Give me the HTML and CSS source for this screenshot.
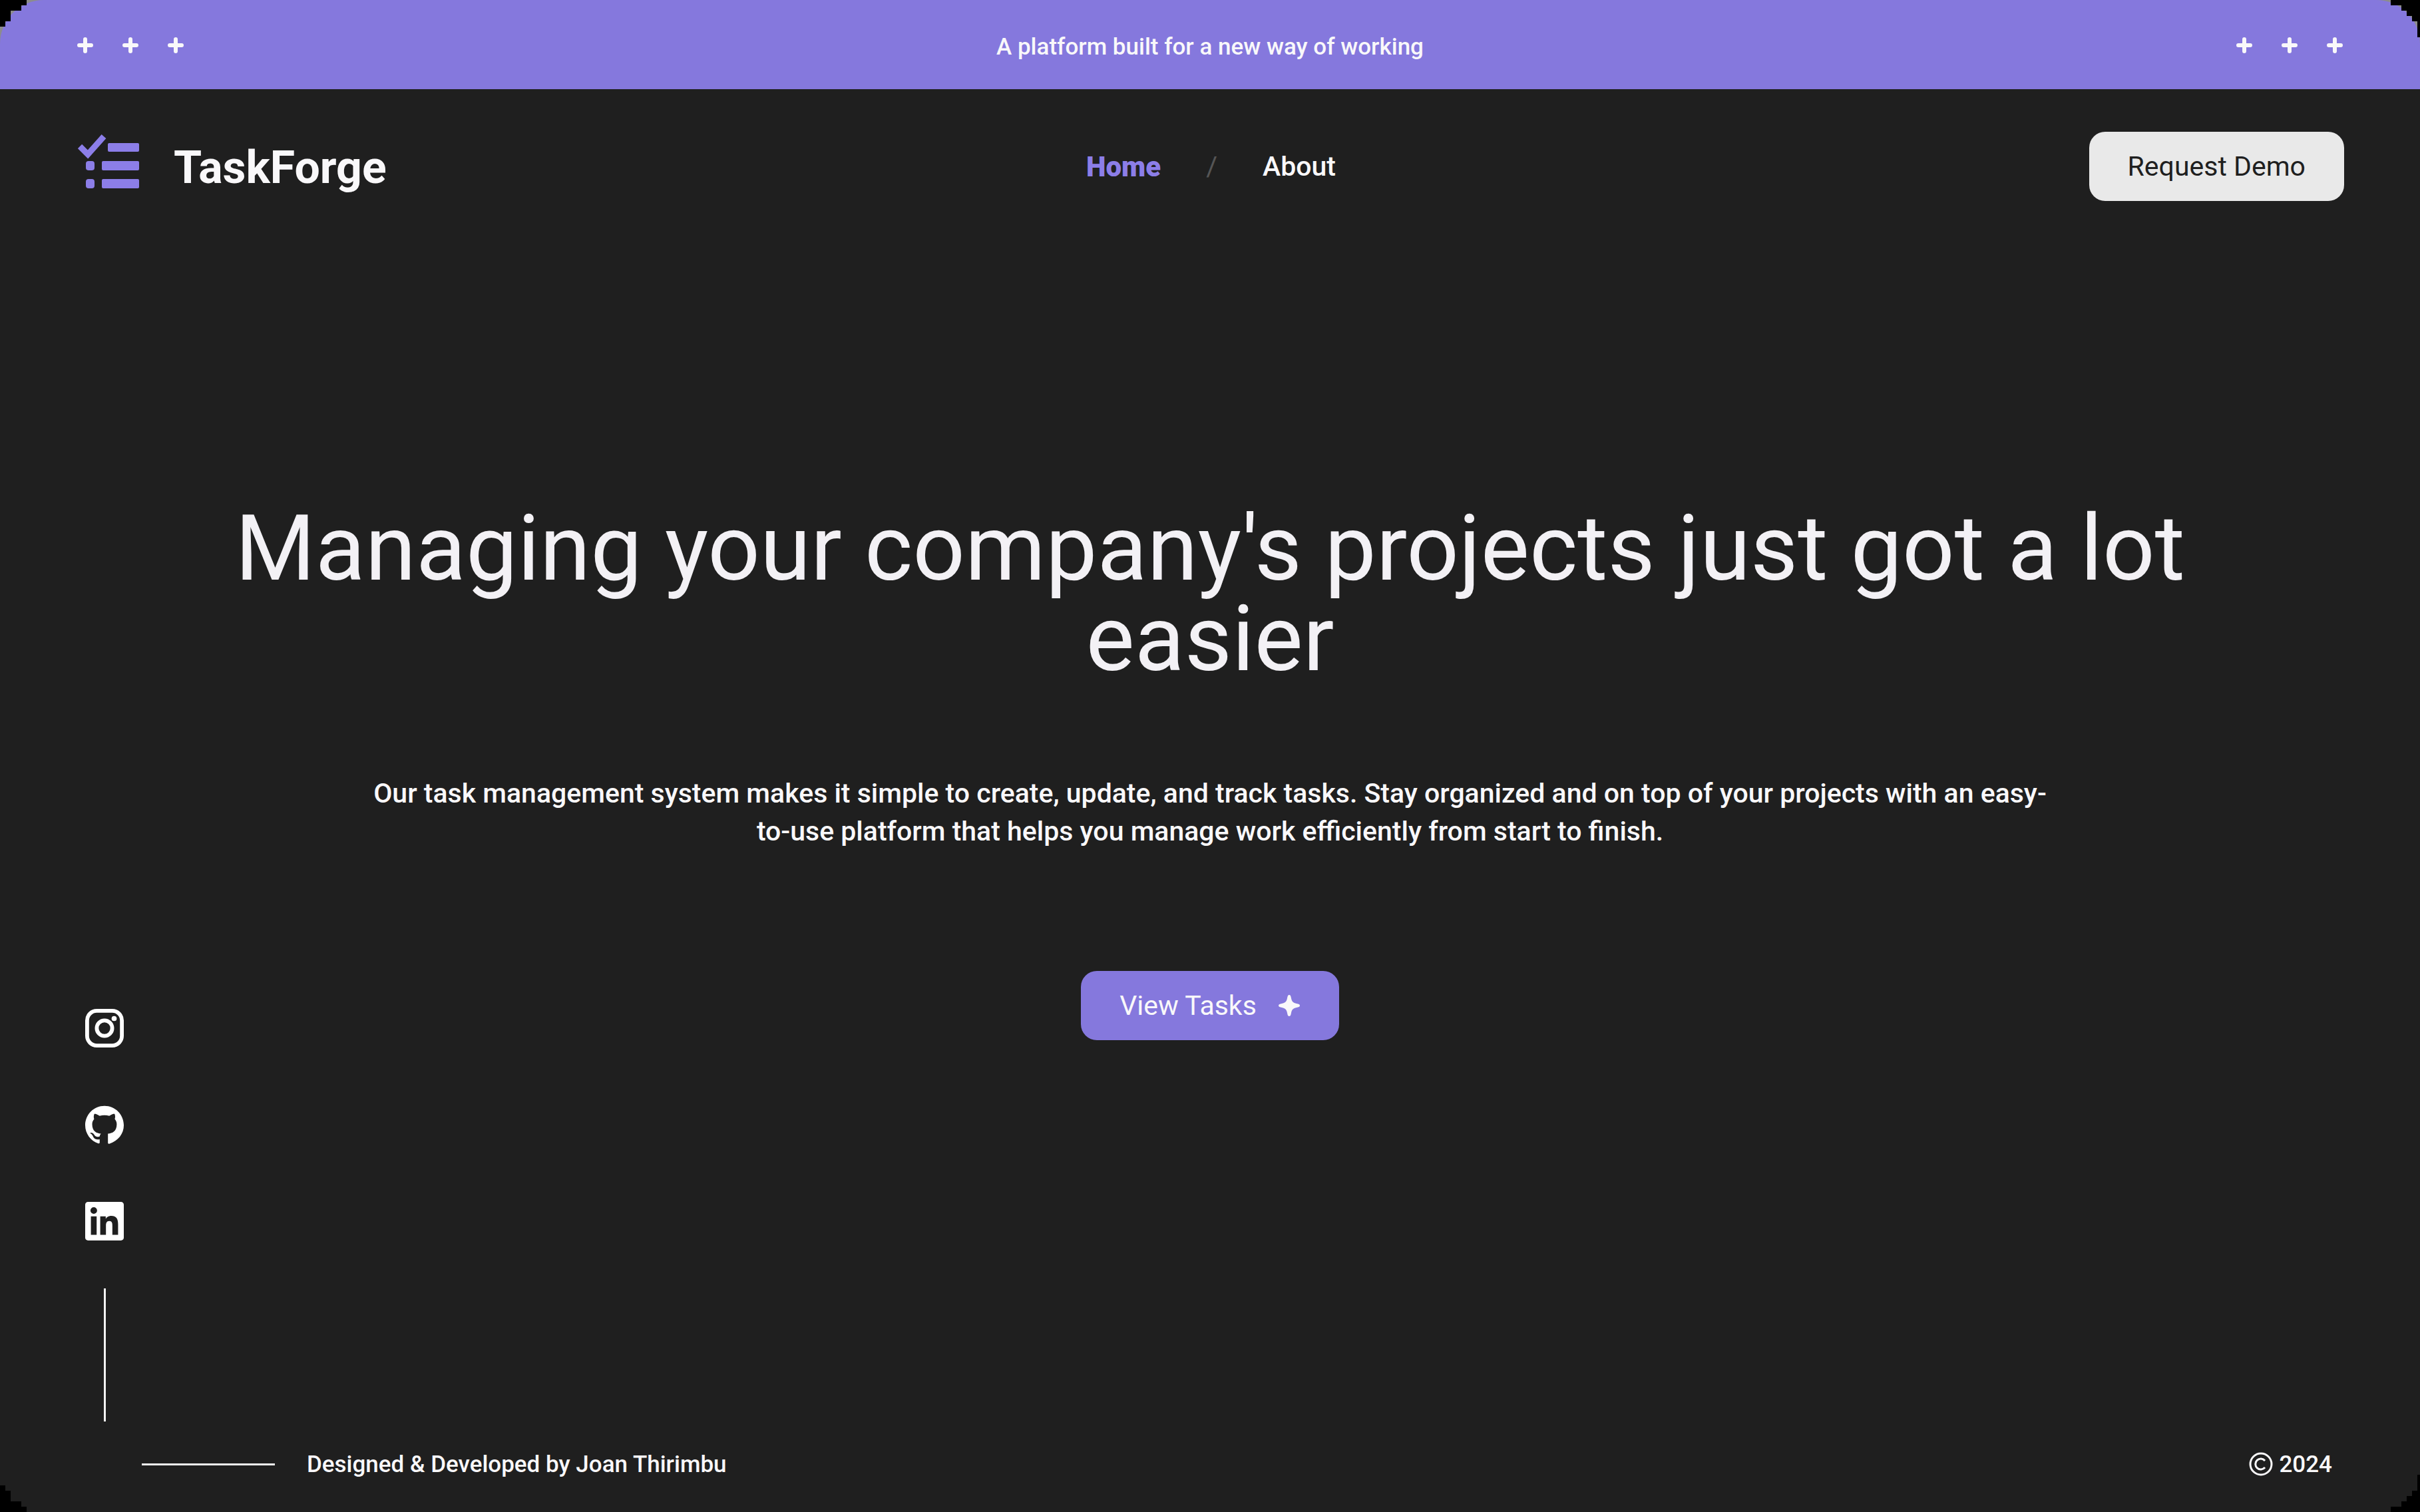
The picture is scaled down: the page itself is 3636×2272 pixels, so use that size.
FILE: index.html
```html
<!DOCTYPE html>
<html lang="en">
<head>
<meta charset="utf-8">
<meta name="viewport" content="width=device-width, initial-scale=1">
<title>TaskForge</title>
<link rel="stylesheet" href="styles.css">
</head>
<body>
<svg class="sprite" aria-hidden="true">
  <symbol id="plus" viewBox="0 0 24 24"><path d="M12 3v18M3 12h18" fill="none" stroke="currentColor" stroke-width="6" stroke-linecap="round"/></symbol>
  <symbol id="corner" viewBox="0 0 44 56"><path d="M0 0H40V8H32V16H16V32H8V40H0Z"/></symbol>
  <symbol id="corner-wide" viewBox="0 0 44 56"><path d="M0 0H44V8H28V16H20V24H12V32H4V56H0Z"/></symbol>
</svg>
<div class="page">
  <div class="banner-wrap">
    <div class="banner">
      <div class="pluses" aria-hidden="true">
        <svg><use href="#plus"/></svg><svg><use href="#plus"/></svg><svg><use href="#plus"/></svg>
      </div>
      <p class="banner-text">A platform built for a new way of working</p>
      <div class="pluses" aria-hidden="true">
        <svg><use href="#plus"/></svg><svg><use href="#plus"/></svg><svg><use href="#plus"/></svg>
      </div>
    </div>
  </div>
  <header class="header">
    <a class="brand" href="#">
      <svg class="brand-icon" viewBox="0 0 92 82" aria-hidden="true">
        <path d="M3 19 15 31 39 4" fill="none" stroke="currentColor" stroke-width="9"/>
        <g fill="currentColor">
          <rect x="45" y="14" width="47" height="13" rx="2"/>
          <rect x="36" y="41" width="56" height="14" rx="2"/>
          <rect x="36" y="68" width="56" height="14" rx="2"/>
          <rect x="12" y="41" width="13" height="14" rx="4"/>
          <rect x="12" y="68" width="13" height="14" rx="4"/>
        </g>
      </svg>
      <span>TaskForge</span>
    </a>
    <nav class="nav">
      <a class="active" href="#">Home</a>
      <span class="slash">/</span>
      <a href="#">About</a>
    </nav>
    <button class="btn btn-light" type="button">Request Demo</button>
  </header>
  <main class="main">
    <aside class="social">
      <a href="#" aria-label="Instagram">
        <svg viewBox="0 0 60 60" fill="none" stroke="currentColor" stroke-width="6"><rect x="3" y="3" width="54" height="54" rx="15"/><circle cx="30" cy="30" r="12"/><circle cx="45" cy="15" r="4" fill="currentColor" stroke="none"/></svg>
      </a>
      <a href="#" aria-label="GitHub">
        <svg viewBox="0 0 24 24" fill="currentColor"><path d="M12 .297c-6.63 0-12 5.373-12 12 0 5.303 3.438 9.8 8.205 11.385.6.113.82-.258.82-.577 0-.285-.01-1.04-.015-2.04-3.338.724-4.042-1.61-4.042-1.61C4.422 18.07 3.633 17.7 3.633 17.7c-1.087-.744.084-.729.084-.729 1.205.084 1.838 1.236 1.838 1.236 1.07 1.835 2.809 1.305 3.495.998.108-.776.417-1.305.76-1.605-2.665-.3-5.466-1.332-5.466-5.93 0-1.31.465-2.38 1.235-3.22-.135-.303-.54-1.523.105-3.176 0 0 1.005-.322 3.3 1.23.96-.267 1.98-.399 3-.405 1.02.006 2.04.138 3 .405 2.28-1.552 3.285-1.23 3.285-1.23.645 1.653.24 2.873.12 3.176.765.84 1.23 1.91 1.23 3.22 0 4.61-2.805 5.625-5.475 5.92v5.7c0 .315.21.69.825.57C20.565 22.092 24 17.592 24 12.297c0-6.627-5.373-12-12-12"/></svg>
      </a>
      <a href="#" aria-label="LinkedIn">
        <svg viewBox="0 0 24 24" fill="currentColor"><path d="M20.447 20.452h-3.554v-5.569c0-1.328-.027-3.037-1.852-3.037-1.853 0-2.136 1.445-2.136 2.939v5.667H9.351V9h3.414v1.561h.046c.477-.9 1.637-1.85 3.37-1.85 3.601 0 4.267 2.37 4.267 5.455v6.286zM5.337 7.433a2.062 2.062 0 1 1 0-4.125 2.062 2.062 0 0 1 0 4.125zm1.782 13.019H3.555V9h3.564v11.452zM22.225 0H1.771C.792 0 0 .774 0 1.729v20.542C0 23.227.792 24 1.771 24h20.451C23.2 24 24 23.227 24 22.271V1.729C24 .774 23.2 0 22.222 0h.003z"/></svg>
      </a>
      <span class="rule-v"></span>
    </aside>
    <section class="hero">
      <h1>Managing your company's projects just got a lot easier</h1>
      <p>Our task management system makes it simple to create, update, and track tasks. Stay organized and on top of your projects with an easy-to-use platform that helps you manage work efficiently from start to finish.</p>
      <button class="btn btn-primary" type="button">View Tasks
        <svg viewBox="0 0 34 34" aria-hidden="true"><path d="M17 1c2 0 2.500 2 3 5 1 5 3 7 8 8 3 .5 5 1 5 3s-2 2.500-5 3c-5 1-7 3-8 8-.5 3-1 5-3 5s-2.500-2-3-5c-1-5-3-7-8-8-3-.5-5-1-5-3s2-2.500 5-3c5-1 7-3 8-8 .5-3 1-5 3-5z" fill="currentColor"/></svg>
      </button>
    </section>
  </main>
  <footer class="footer">
    <p class="credit"><span class="rule-h"></span>Designed &amp; Developed by Joan Thirimbu</p>
    <p class="copyright">
      <svg viewBox="0 0 36 36" fill="none" stroke="currentColor" role="img" aria-label="Copyright"><circle cx="18" cy="18" r="16" stroke-width="3"/><path d="M24 13a8 8 0 1 0 0 10" stroke-width="3"/></svg>
      2024
    </p>
  </footer>
  <svg class="corner tl" aria-hidden="true"><use href="#corner"/></svg>
  <svg class="corner tr" aria-hidden="true"><use href="#corner-wide"/></svg>
  <svg class="corner bl" aria-hidden="true"><use href="#corner"/></svg>
  <svg class="corner br" aria-hidden="true"><use href="#corner-wide"/></svg>
</div>
</body>
</html>
```

FILE: styles.css
```css
* { box-sizing: border-box; }

body {
  margin: 0;
  background: #1f1f1f;
  color: #f9f8fa;
  font-family: Roboto, "Liberation Sans", sans-serif;
  font-size: 41px;
  font-weight: 500;
}

h1, p { margin: 0; }
a { color: inherit; text-decoration: none; }
svg { display: block; }
.sprite { position: absolute; width: 0; height: 0; }

.page {
  position: relative;
  display: flex;
  flex-direction: column;
  min-height: 100vh;
}

.banner-wrap { background: #8c8c8c; }

.banner {
  display: grid;
  grid-template-columns: 1fr auto 1fr;
  align-items: center;
  height: 134px;
  padding: 2px 116px 0;
  border-radius: 66px 66px 0 0;
  background: #8578dd;
}

.banner-text { font-size: 35px; padding-top: 4px; }
.pluses { display: flex; gap: 44px; }
.pluses:last-child { justify-content: flex-end; }
.pluses svg { width: 24px; height: 24px; }

.header {
  display: grid;
  grid-template-columns: 1fr auto 1fr;
  align-items: center;
  padding: 64px 114px 64px 117px;
}

.brand {
  display: flex;
  align-items: center;
  gap: 52px;
  font-size: 68px;
  font-weight: 700;
  line-height: 80px;
}
.brand span { padding-top: 4px; }
.brand-icon { width: 92px; height: 82px; margin-bottom: 16px; color: #8c7ee8; }

.nav { display: flex; align-items: center; gap: 68px; }
.nav .active { color: #8c7ee8; font-size: 42px; font-weight: 900; }
.slash { color: #555; font-weight: 400; }

.btn {
  display: flex;
  align-items: center;
  justify-content: center;
  gap: 32px;
  height: 104px;
  padding: 0 58px;
  border: 0;
  border-radius: 24px;
  font: 400 41px/48px Roboto, "Liberation Sans", sans-serif;
}
.btn-light { justify-self: end; background: #e9e9e9; color: #1f1f1f; }
.btn-primary { background: #8578dd; color: #f9f8fa; }
.btn-primary svg { width: 34px; height: 34px; }

.main {
  flex: 1;
  display: grid;
  grid-template-columns: 86px 1fr 86px;
  padding: 0 114px;
}

.social {
  align-self: end;
  display: flex;
  flex-direction: column;
  align-items: center;
  gap: 87px;
  color: #fff;
}
.social svg { width: 58px; height: 58px; }
.rule-v { width: 3px; height: 200px; margin-top: -15px; background: #f3f3f3; }

.hero {
  display: flex;
  flex-direction: column;
  align-items: center;
  padding-top: 390px;
  text-align: center;
}
.hero h1 {
  max-width: 3000px;
  color: #f3f1f5;
  font-size: 138px;
  font-weight: 400;
  line-height: 136px;
}
.hero p { max-width: 2540px; margin: 136px 0 181px; line-height: 57px; }

.footer {
  display: flex;
  align-items: center;
  justify-content: space-between;
  height: 136px;
  padding: 0 132px 8px 213px;
  font-size: 35px;
}
.credit, .copyright { display: flex; align-items: center; }
.credit { gap: 48px; }
.rule-h { width: 200px; height: 3px; background: #f3f3f3; }
.copyright { gap: 9px; }
.copyright svg { width: 36px; height: 36px; }

.corner { position: absolute; width: 44px; height: 56px; }
.tl { top: 0; left: 0; }
.tr { top: 0; right: 0; transform: scaleX(-1); }
.bl { bottom: 0; left: 0; transform: scaleY(-1); }
.br { bottom: 0; right: 0; transform: scale(-1, -1); }
```
